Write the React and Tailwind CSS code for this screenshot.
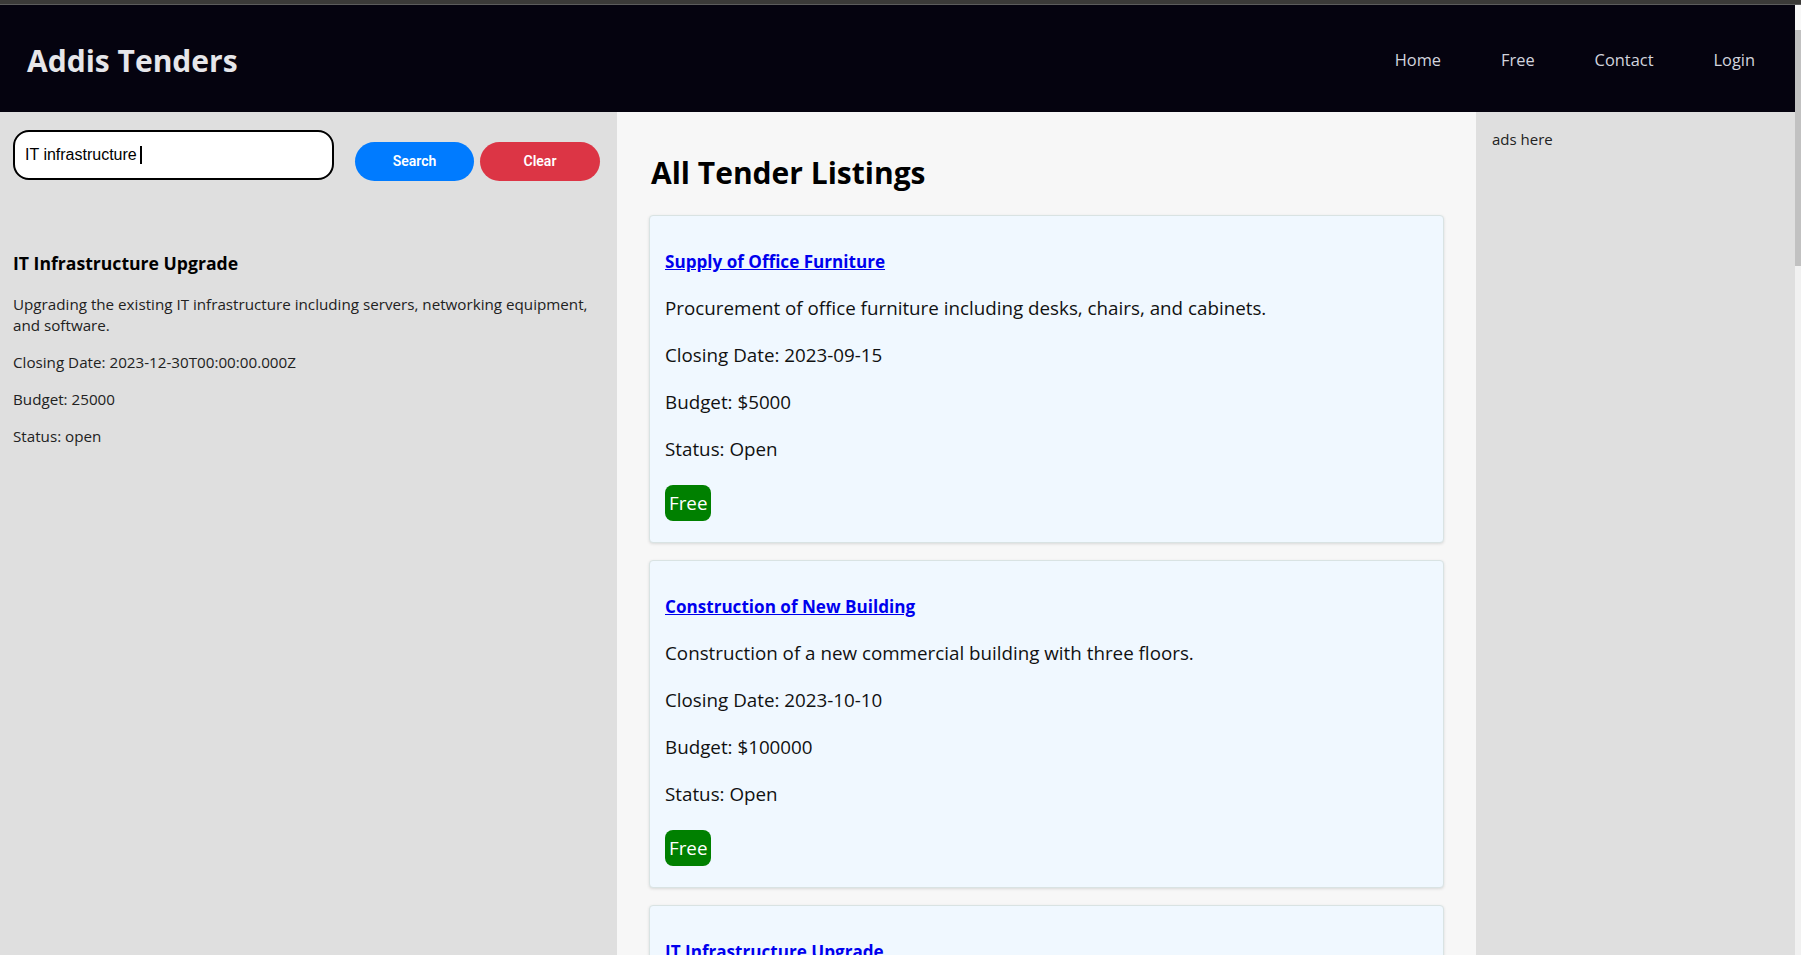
import React from 'react';

const tenders = [
  {
    title: 'Supply of Office Furniture',
    description: 'Procurement of office furniture including desks, chairs, and cabinets.',
    closingDate: '2023-09-15',
    budget: '$5000',
    status: 'Open',
  },
  {
    title: 'Construction of New Building',
    description: 'Construction of a new commercial building with three floors.',
    closingDate: '2023-10-10',
    budget: '$100000',
    status: 'Open',
  },
  {
    title: 'IT Infrastructure Upgrade',
    description: 'Upgrading the existing IT infrastructure including servers, networking equipment, and software.',
    closingDate: '2023-12-30',
    budget: '$25000',
    status: 'Open',
  },
];

const App = () => {
  return (
    <div className="h-[955px] overflow-hidden flex flex-col font-['Open_Sans',sans-serif]">
      {/* browser strip */}
      <div className="h-[5px] bg-[#3b3a38] border-b border-[#5c5c5c] shrink-0"></div>

      <div className="flex flex-1 min-h-0">
        <div className="flex-1 flex flex-col min-w-0">
          {/* Header */}
          <header className="h-[107px] shrink-0 bg-[#05030f] flex items-center justify-between pl-[27px] pr-[40px] pt-[4px]">
            <h1 className="text-[30px] font-bold text-[#e6e6ea] leading-none">Addis Tenders</h1>
            <nav className="flex items-center gap-[60px] text-[16.4px] text-[#d2d4de]">
              <a>Home</a>
              <a>Free</a>
              <a>Contact</a>
              <a>Login</a>
            </nav>
          </header>

          <div className="flex flex-1 min-h-0">
            {/* Search side */}
            <aside className="w-[617px] shrink-0 bg-[#dfdfdf] px-[13px]">
              <div className="flex items-end mt-[18px]">
                <div className="w-[321px] h-[50px] border-2 border-black rounded-[16px] bg-white flex items-center px-[10px] font-['Liberation_Sans',Arial,sans-serif] text-[16px] text-black">
                  <span>IT infrastructure</span>
                  <span className="w-[2px] h-[18px] bg-black ml-[3px]"></span>
                </div>
                <button className="ml-[21px] w-[119px] h-[39px] translate-y-[1px] rounded-full bg-[#007bff] text-white text-[14px] font-semibold font-['Roboto',sans-serif]">
                  Search
                </button>
                <button className="ml-[6px] w-[120px] h-[39px] translate-y-[1px] rounded-full bg-[#dc3545] text-white text-[14px] font-semibold font-['Roboto',sans-serif]">
                  Clear
                </button>
              </div>

              <div className="mt-[70px]">
                <h3 className="text-[17.6px] font-bold leading-[26px] text-black">IT Infrastructure Upgrade</h3>
                <p className="mt-[18px] text-[15.2px] leading-[21px] text-[#222]">
                  Upgrading the existing IT infrastructure including servers, networking equipment, and software.
                </p>
                <p className="mt-[16px] text-[15.2px] leading-[21px] text-[#222]">Closing Date: 2023-12-30T00:00:00.000Z</p>
                <p className="mt-[16px] text-[15.2px] leading-[21px] text-[#222]">Budget: 25000</p>
                <p className="mt-[16px] text-[15.2px] leading-[21px] text-[#222]">Status: open</p>
              </div>
            </aside>

            {/* Listings */}
            <main className="w-[859px] shrink-0 bg-[#f7f7f7] px-[32px]">
              <h2 className="mt-[41px] text-[30px] font-bold leading-[40px] text-black pl-[2px]">All Tender Listings</h2>
              <div className="mt-[22px]">
                {tenders.map((t, i) => (
                  <div
                    key={i}
                    className="mb-[17px] bg-[#f0f8ff] border border-[#d9e3e3] rounded-[4px] shadow-[0_1px_3px_rgba(0,0,0,0.12)] px-[15px] pt-[33px] pb-[21px]"
                  >
                    <a className="block text-[17.1px] font-bold leading-[26px] text-[#0000ee] underline">{t.title}</a>
                    <p className="mt-[19px] text-[18.8px] leading-[29px] text-[#111]">{t.description}</p>
                    <p className="mt-[18px] text-[18.8px] leading-[29px] text-[#111]">Closing Date: {t.closingDate}</p>
                    <p className="mt-[18px] text-[18.8px] leading-[29px] text-[#111]">Budget: {t.budget}</p>
                    <p className="mt-[18px] text-[18.8px] leading-[29px] text-[#111]">Status: {t.status}</p>
                    <div className="mt-[21px] flex">
                      <span className="h-[36px] px-[4px] rounded-[8px] bg-[#008000] text-white text-[18.8px] leading-[36px]">
                        Free
                      </span>
                    </div>
                  </div>
                ))}
              </div>
            </main>

            {/* Ads */}
            <aside className="flex-1 bg-[#dfdfdf] pl-[16px] pt-[16px]">
              <p className="text-[15px] leading-[22px] text-[#222]">ads here</p>
            </aside>
          </div>
        </div>

        {/* scrollbar */}
        <div className="w-[6px] shrink-0 flex flex-col bg-[#f1f1f1]">
          <div className="h-[25px] bg-[#f8f8f8]"></div>
          <div className="h-[236px] bg-[#c1c1c1]"></div>
        </div>
      </div>
    </div>
  );
};

export default App;
